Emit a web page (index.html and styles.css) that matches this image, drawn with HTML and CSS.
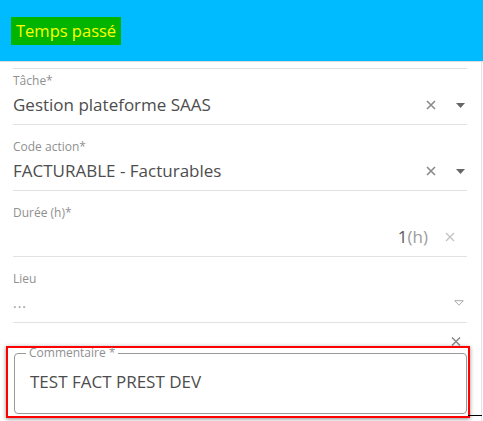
FILE: index.html
```html
<!DOCTYPE html>
<html lang="fr">
<head>
    <meta charset="UTF-8">
    <meta name="viewport" content="width=device-width, initial-scale=1.0">
    <title>Temps passé</title>
    <link rel="stylesheet" href="styles.css">
</head>
<body>
    <!-- Header -->
    <div class="header">
        <span class="title">Temps passé</span>
    </div>

    <div class="form">
        <!-- Tâche -->
        <div class="field">
            <div class="label">Tâche*</div>
            <div class="row">
                <span class="value">Gestion plateforme SAAS</span>
                <span class="icon clear">
                    <svg width="10" height="10" viewBox="0 0 10 10"><path d="M1 1L9 9M9 1L1 9" stroke="#8a8a8a" stroke-width="1.6"/></svg>
                </span>
                <span class="icon caret">
                    <svg width="9" height="5" viewBox="0 0 9 5"><path d="M0 0H9L4.5 5Z" fill="#666"/></svg>
                </span>
            </div>
        </div>

        <!-- Code action -->
        <div class="field">
            <div class="label">Code action*</div>
            <div class="row">
                <span class="value">FACTURABLE - Facturables</span>
                <span class="icon clear">
                    <svg width="10" height="10" viewBox="0 0 10 10"><path d="M1 1L9 9M9 1L1 9" stroke="#8a8a8a" stroke-width="1.6"/></svg>
                </span>
                <span class="icon caret">
                    <svg width="9" height="5" viewBox="0 0 9 5"><path d="M0 0H9L4.5 5Z" fill="#666"/></svg>
                </span>
            </div>
        </div>

        <!-- Durée -->
        <div class="field">
            <div class="label">Durée (h)*</div>
            <div class="row">
                <span class="value number">1<span class="unit">(h)</span></span>
                <span class="icon clear light">
                    <svg width="10" height="10" viewBox="0 0 10 10"><path d="M1 1L9 9M9 1L1 9" stroke="#c4c4c4" stroke-width="1.4"/></svg>
                </span>
            </div>
        </div>

        <!-- Lieu -->
        <div class="field">
            <div class="label">Lieu</div>
            <div class="row">
                <span class="value empty">...</span>
                <span class="icon caret-open">
                    <svg width="10" height="6" viewBox="0 0 10 6"><path d="M0.7 0.7H9.3L5 5.2Z" fill="none" stroke="#aaa" stroke-width="1"/></svg>
                </span>
            </div>
        </div>

        <!-- Commentaire -->
        <div class="clear-row">
            <svg width="10" height="9" viewBox="0 0 10 9"><path d="M1 0.5L9 8.5M9 0.5L1 8.5" stroke="#8a8a8a" stroke-width="1.5"/></svg>
        </div>
        <div class="comment-box">
            <fieldset class="comment">
                <legend>Commentaire *</legend>
                <div class="comment-text">TEST FACT PREST DEV</div>
            </fieldset>
        </div>
    </div>
</body>
</html>
```

FILE: styles.css
```css
/* Page */
body {
    font-family: "Open Sans", Arial, sans-serif;
    margin: 0;
    width: 483px;
    height: 421px;
    overflow: hidden;
    background: #fff;
    color: #4d4d4d;
}

/* Header bar */
.header {
    height: 62px;
    background-color: #00bbff;
    border-bottom: 1px solid #dcdcdc;
    box-sizing: border-box;
    padding: 17px 11px 0;
}

.title {
    display: inline-block;
    background-color: #00b400;
    color: #ffff00;
    font-size: 16.5px;
    height: 28px;
    line-height: 28px;
    padding: 0 5px;
}

/* Form */
.form {
    width: 482px;
    box-sizing: border-box;
    border-right: 1px solid #e4e4e4;
    padding: 6px 14px 0 13px;
    height: 359px;
}

.field {
    border-bottom: 1px solid #e2e2e2;
    padding: 14px 0 7px;
}

.field:first-child {
    border-top: 1px solid #e2e2e2;
    padding-top: 4px;
}

.label {
    font-size: 12px;
    line-height: 16px;
    color: #909090;
}

.row {
    display: flex;
    align-items: center;
    margin-top: 4px;
    height: 24px;
}

.value {
    flex: 1;
    font-size: 17px;
    line-height: 24px;
    color: #4d4d4d;
    white-space: nowrap;
}

.value.number {
    text-align: right;
    color: #5a5a5a;
}

.unit {
    color: #9c9c9c;
}

.value.empty {
    color: #999;
    font-size: 14px;
    letter-spacing: 1px;
}

/* Icons */
.icon {
    display: flex;
    align-items: center;
    justify-content: center;
    width: 14px;
    height: 24px;
}

.clear {
    margin-right: 15px;
}

.clear.light {
    margin-left: 15px;
    margin-right: 10px;
}

.caret {
    width: 14px;
}

.caret-open {
    margin-right: 1px;
}

.clear-row {
    display: flex;
    justify-content: flex-end;
    align-items: flex-end;
    height: 23px;
    padding-right: 6px;
}

.clear-row svg {
    display: block;
}

/* Comment box */
.comment-box {
    position: relative;
    margin: 0 -3px 0 -7px;
    border: 2px solid #ff0000;
    box-shadow: 0 1px 4px rgba(0, 0, 0, 0.45);
    padding: 0 1px 1px 6px;
    height: 67px;
}

.comment-box::after {
    content: "";
    position: absolute;
    left: 100%;
    bottom: 0;
    width: 14px;
    border-top: 1px solid #000;
}

.comment {
    margin: 0;
    border: 1px solid #9a9a9a;
    border-radius: 4px;
    padding: 0 0 0 15px;
    height: 66px;
    box-sizing: border-box;
}

.comment legend {
    font-size: 12px;
    line-height: 10px;
    color: #909090;
    padding: 0 3px;
    margin-left: -4px;
}

.comment-text {
    font-size: 17px;
    line-height: 24px;
    color: #4d4d4d;
    margin-top: 12px;
}
```
